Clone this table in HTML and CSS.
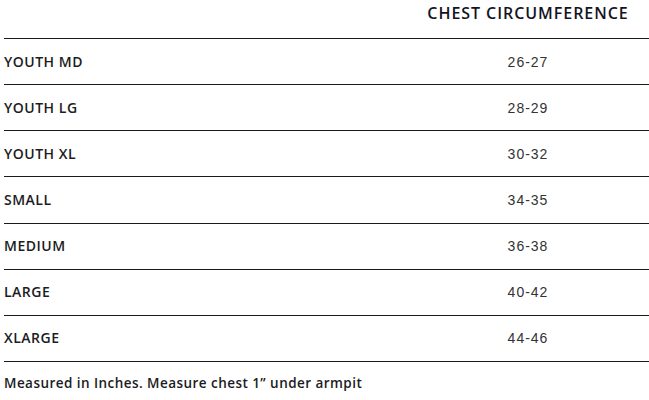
FILE: index.html
```html
<!DOCTYPE html>
<html>
<head>
<meta charset="utf-8">
<link rel="stylesheet" href="styles.css">
</head>
<body>
<div class="chart">
  <div class="row head">
    <div class="label"></div>
    <div class="value">CHEST CIRCUMFERENCE</div>
  </div>
  <div class="row"><div class="label">YOUTH MD</div><div class="value">26-27</div></div>
  <div class="row"><div class="label">YOUTH LG</div><div class="value">28-29</div></div>
  <div class="row"><div class="label">YOUTH XL</div><div class="value">30-32</div></div>
  <div class="row"><div class="label">SMALL</div><div class="value">34-35</div></div>
  <div class="row"><div class="label">MEDIUM</div><div class="value">36-38</div></div>
  <div class="row"><div class="label">LARGE</div><div class="value">40-42</div></div>
  <div class="row"><div class="label">XLARGE</div><div class="value">44-46</div></div>
  <p class="note">Measured in Inches. Measure chest 1” under armpit</p>
</div>
</body>
</html>
```
FILE: styles.css
```css
html, body {
  margin: 0;
  padding: 0;
  background: #fff;
}
.chart {
  padding-left: 4px;
  font-family: "Open Sans", sans-serif;
  color: #1c1c22;
}
.row {
  display: grid;
  grid-template-columns: 403px 242px;
  height: 45.15px;
  align-items: center;
  border-bottom: 1px solid #1a1a1a;
}
.row.head {
  height: 38px;
  align-items: start;
}
.label {
  font-size: 14px;
  font-weight: 600;
  letter-spacing: 0.5px;
  padding-bottom: 1px;
}
.value {
  text-align: center;
}
.row .value {
  font-family: "Liberation Sans", Arial, sans-serif;
  font-size: 14px;
  letter-spacing: 1px;
  color: #333;
}
.row.head .value {
  font-family: "Open Sans", sans-serif;
  font-size: 16px;
  font-weight: 600;
  letter-spacing: 0.95px;
  padding-top: 2px;
  color: #14141f;
}
.note {
  margin: 0;
  padding-top: 12px;
  font-size: 13.5px;
  font-weight: 600;
  letter-spacing: 0.45px;
}
```
